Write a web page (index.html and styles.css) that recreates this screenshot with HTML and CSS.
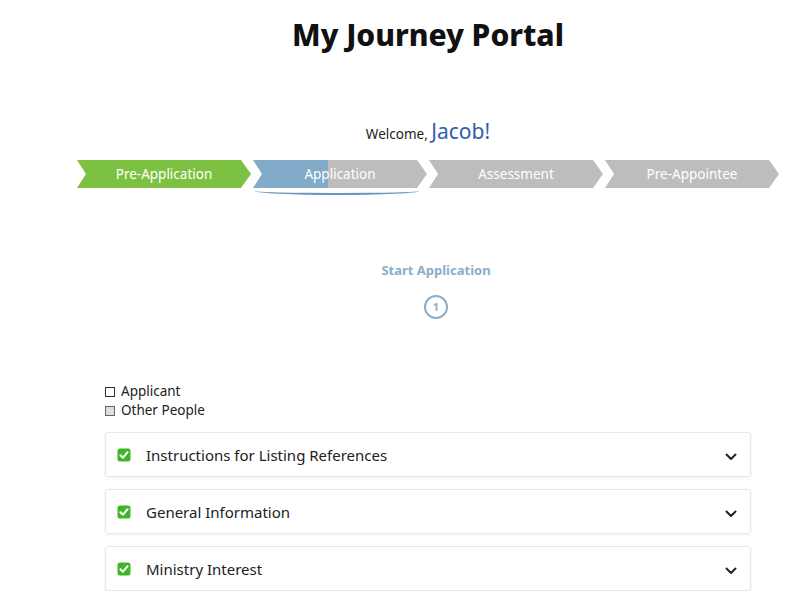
FILE: index.html
```html
<!DOCTYPE html>
<html lang="en">
<head>
  <meta charset="UTF-8">
  <meta name="viewport" content="width=device-width, initial-scale=1.0">
  <title>My Journey Portal</title>
  <link rel="stylesheet" href="styles.css">
</head>
<body>
  <div class="portal">
    <h1 class="portal-title">My Journey Portal</h1>

    <p class="welcome">Welcome, <span class="welcome-name">Jacob!</span></p>

    <!-- Etapas da jornada -->
    <div class="steps">
      <div class="step step-done">Pre-Application</div>
      <div class="step step-current">Application</div>
      <div class="step">Assessment</div>
      <div class="step">Pre-Appointee</div>
    </div>
    <div class="steps-track">
      <div class="steps-line"></div>
    </div>

    <div class="sub-step">
      <h2 class="sub-step-title">Start Application</h2>
      <div class="sub-step-number">1</div>
    </div>

    <div class="filters">
      <label class="filter"><span class="box"></span>Applicant</label>
      <label class="filter"><span class="box box-filled"></span>Other People</label>
    </div>

    <div class="sections">
      <div class="section-card">
        <svg class="check" width="14" height="14" viewBox="0 0 14 14"><rect x="0.5" y="0.5" width="13" height="13" rx="2.5" fill="#3fb52a"/><path d="M3.4 7.2 L6 9.7 L10.6 4.2" fill="none" stroke="#fff" stroke-width="2" stroke-linecap="round" stroke-linejoin="round"/></svg>
        <span class="section-name">Instructions for Listing References</span>
        <svg class="chevron" width="12" height="8" viewBox="0 0 12 8"><path d="M1.5 1.5 L6 6 L10.5 1.5" fill="none" stroke="#222" stroke-width="2" stroke-linecap="round" stroke-linejoin="round"/></svg>
      </div>
      <div class="section-card">
        <svg class="check" width="14" height="14" viewBox="0 0 14 14"><rect x="0.5" y="0.5" width="13" height="13" rx="2.5" fill="#3fb52a"/><path d="M3.4 7.2 L6 9.7 L10.6 4.2" fill="none" stroke="#fff" stroke-width="2" stroke-linecap="round" stroke-linejoin="round"/></svg>
        <span class="section-name">General Information</span>
        <svg class="chevron" width="12" height="8" viewBox="0 0 12 8"><path d="M1.5 1.5 L6 6 L10.5 1.5" fill="none" stroke="#222" stroke-width="2" stroke-linecap="round" stroke-linejoin="round"/></svg>
      </div>
      <div class="section-card">
        <svg class="check" width="14" height="14" viewBox="0 0 14 14"><rect x="0.5" y="0.5" width="13" height="13" rx="2.5" fill="#3fb52a"/><path d="M3.4 7.2 L6 9.7 L10.6 4.2" fill="none" stroke="#fff" stroke-width="2" stroke-linecap="round" stroke-linejoin="round"/></svg>
        <span class="section-name">Ministry Interest</span>
        <svg class="chevron" width="12" height="8" viewBox="0 0 12 8"><path d="M1.5 1.5 L6 6 L10.5 1.5" fill="none" stroke="#222" stroke-width="2" stroke-linecap="round" stroke-linejoin="round"/></svg>
      </div>
    </div>
  </div>
</body>
</html>
```

FILE: styles.css
```css
/* Reset */
* {
  margin: 0;
  padding: 0;
  box-sizing: border-box;
}

body {
  font-family: "Noto Sans", Arial, sans-serif;
  background-color: #fff;
  color: #222;
}

/* Container principal */
.portal {
  padding-left: 48px;
  width: 808px;
  overflow: hidden;
}

.portal-title {
  font-size: 30px;
  font-weight: 800;
  color: #111;
  text-align: center;
  line-height: 40px;
  padding-top: 15px;
}

.welcome {
  text-align: center;
  font-size: 13.5px;
  color: #222;
  margin-top: 62px;
  line-height: 28px;
}

.welcome-name {
  font-size: 21px;
  color: #2d5fae;
}

/* Etapas */
.steps {
  display: flex;
  gap: 2px;
  width: 702px;
  margin: 12px auto 0;
}

.step {
  width: 174px;
  height: 28px;
  line-height: 28px;
  font-size: 13.5px;
  color: #fff;
  text-align: center;
  background-color: #bdbdbd;
  clip-path: polygon(0 0, calc(100% - 10px) 0, 100% 50%, calc(100% - 10px) 100%, 0 100%, 9px 50%);
}

.step-done {
  background-color: #7dc142;
}

.step-current {
  background: linear-gradient(to right, #82aac9 43%, #bdbdbd 43%);
}

.steps-track {
  width: 702px;
  margin: 3px auto 0;
  height: 4px;
}

.steps-line {
  margin-left: 178px;
  width: 164px;
  height: 4px;
  border-bottom: 2px solid #6b97be;
  border-radius: 0 0 50% 50% / 0 0 100% 100%;
}

.sub-step {
  display: flex;
  flex-direction: column;
  align-items: center;
  padding-left: 16px;
  margin-top: 66px;
}

.sub-step-title {
  font-size: 13px;
  font-weight: 700;
  color: #8aaecb;
  line-height: 18px;
}

.sub-step-number {
  margin-top: 16px;
  width: 24px;
  height: 24px;
  border: 2.5px solid #8aaecb;
  border-radius: 50%;
  font-size: 11px;
  font-weight: 700;
  color: #8aaecb;
  text-align: center;
  line-height: 19px;
}

/* Filtros */
.filters {
  width: 646px;
  margin: 63px auto 0;
  display: flex;
  flex-direction: column;
}

.filter {
  display: flex;
  align-items: center;
  gap: 6px;
  font-size: 13.5px;
  line-height: 19px;
  color: #222;
}

.box {
  width: 10px;
  height: 10px;
  border: 1px solid #333;
  background-color: #fff;
}

.box-filled {
  background-color: #ddd;
  border-color: #666;
}

/* Secções */
.sections {
  width: 646px;
  margin: 12px auto 0;
  display: flex;
  flex-direction: column;
  gap: 12px;
}

.section-card {
  display: flex;
  align-items: center;
  height: 45px;
  padding: 0 13px 0 11px;
  border: 1px solid #e8e8e8;
  border-radius: 3px;
  box-shadow: 0 1px 4px rgba(0, 0, 0, 0.06);
  background-color: #fff;
}

.check {
  flex-shrink: 0;
}

.section-name {
  margin-left: 15px;
  font-size: 15px;
  color: #222;
  flex: 1;
}

.chevron {
  margin-top: 4px;
}
```
